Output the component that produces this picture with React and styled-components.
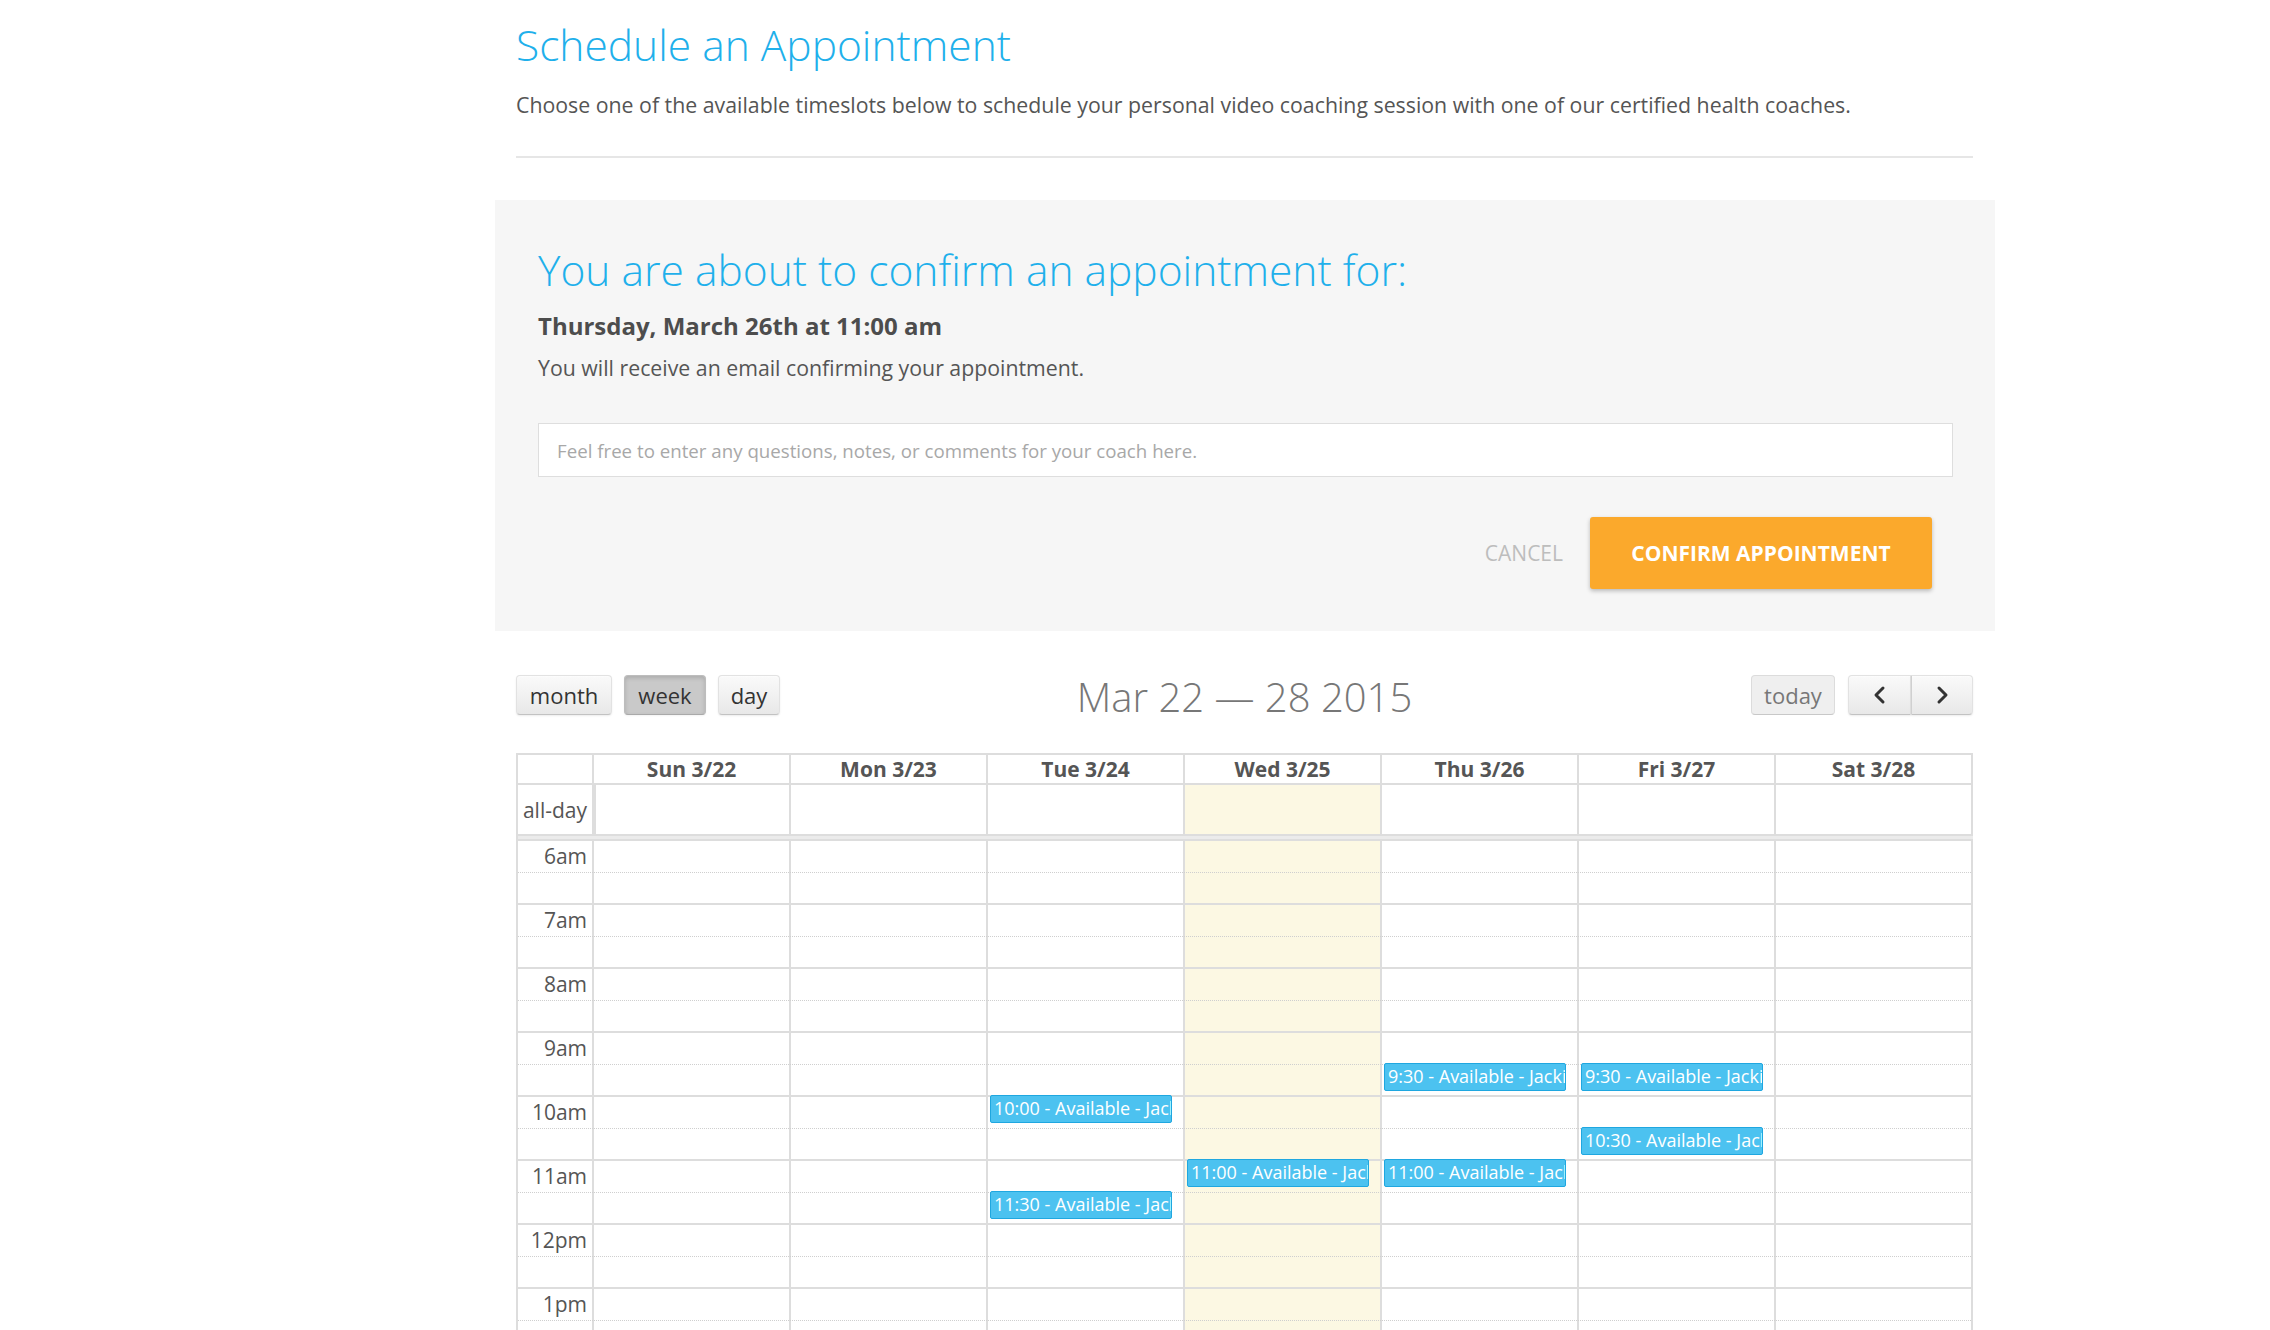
import React from 'react'
import styled, {createGlobalStyle, css} from 'styled-components'

const GlobalStyle = createGlobalStyle`
  html, body {
    margin: 0;
    padding: 0;
    background: #fff;
    overflow: hidden;
  }
  body {
    font-family: "Open Sans", "Liberation Sans", sans-serif;
    color: #555;
  }
  *, *::before, *::after {
    box-sizing: border-box;
  }
`

const BLUE = '#1fb0eb'
const LINE = '#ddd'
const AXIS = '74px'

const Page = styled.main`
  width: 1457px;
  margin-left: 516px;
  padding-top: 22px;
`

const Title = styled.h1`
  margin: 0;
  font-size: 42.5px;
  font-weight: 300;
  line-height: 1.1;
  color: ${BLUE};
`

const Lead = styled.p`
  margin: 21px 0 0;
  font-size: 21.3px;
  line-height: 1.4;
  color: #555;
`

const Rule = styled.hr`
  margin: 36px 0 0;
  border: 0;
  height: 2px;
  background: #e6e6e6;
`

const Panel = styled.section`
  margin: 42px 0 0 -21px;
  width: 1500px;
  padding: 47px 42px 42px 43px;
  background: #f6f6f6;
`

const PanelTitle = styled.h2`
  margin: 0;
  font-size: 42.5px;
  font-weight: 300;
  line-height: 1.1;
  color: ${BLUE};
`

const When = styled.div`
  margin-top: 17px;
  font-size: 24px;
  font-weight: 700;
  line-height: 1.3;
  color: #4d4d4d;
`

const Note = styled.p`
  margin: 11px 0 0;
  font-size: 21.3px;
  line-height: 1.4;
  color: #555;
`

const Notes = styled.input`
  display: block;
  margin-top: 41px;
  width: 100%;
  height: 54px;
  padding: 0 18px;
  border: 1px solid #dedede;
  background: #fff;
  font-family: inherit;
  font-size: 18.7px;
  color: #555;
  outline: none;

  &::placeholder {
    color: #a8a8a8;
  }
`

const Actions = styled.div`
  display: flex;
  justify-content: flex-end;
  align-items: center;
  gap: 27px;
  margin-top: 40px;
  padding-right: 21px;
`

const CancelButton = styled.button`
  border: 0;
  background: none;
  padding: 0;
  font-family: inherit;
  font-size: 21px;
  color: #bdbdbd;
  text-transform: uppercase;
  cursor: pointer;
`

const ConfirmButton = styled.button`
  width: 342px;
  height: 72px;
  border: 0;
  border-radius: 3px;
  background: #fba92c;
  box-shadow: 0 2px 4px rgba(0, 0, 0, 0.25);
  font-family: inherit;
  font-size: 21px;
  font-weight: 700;
  color: #fff;
  text-transform: uppercase;
  cursor: pointer;
`

const Toolbar = styled.div`
  display: grid;
  grid-template-columns: 1fr auto 1fr;
  align-items: center;
  height: 40px;
  margin-top: 42px;
`

const ButtonGroup = styled.div`
  display: flex;
  gap: ${props => props.$gap || 0}px;
  justify-self: ${props => props.$end ? 'end' : 'start'};
`

const ToolButton = styled.button`
  display: flex;
  align-items: center;
  justify-content: center;
  width: ${props => props.$w}px;
  height: 40px;
  padding: 0;
  border: 1px solid;
  border-color: #e2e2e2 #e2e2e2 #c2c2c2;
  border-radius: 4px;
  background: linear-gradient(#fafafa, #e8e8e8);
  box-shadow: inset 0 1px 0 rgba(255, 255, 255, 0.4), 0 1px 2px rgba(0, 0, 0, 0.08);
  font-family: inherit;
  font-size: 22px;
  color: #333;
  cursor: pointer;

  ${props => props.$active && css`
    background: #c9c9c9;
    border-color: #bdbdbd #bdbdbd #a9a9a9;
    box-shadow: inset 0 2px 4px rgba(0, 0, 0, 0.15), 0 1px 2px rgba(0, 0, 0, 0.05);
  `}

  ${props => props.$disabled && css`
    background: #efefef;
    color: #777;
    box-shadow: none;
    border-color: #dcdcdc #dcdcdc #c8c8c8;
  `}

  ${props => props.$left && css`
    border-top-right-radius: 0;
    border-bottom-right-radius: 0;
  `}

  ${props => props.$right && css`
    border-top-left-radius: 0;
    border-bottom-left-radius: 0;
    border-left-color: #d0d0d0;
  `}
`

const RangeTitle = styled.h2`
  margin: 0;
  padding-top: 4px;
  font-size: 40px;
  font-weight: 300;
  line-height: 40px;
  color: #777;
`

const Calendar = styled.div`
  margin-top: 40px;
  border: 2px solid ${LINE};
  border-bottom: 0;
`

const Row = styled.div`
  display: grid;
  grid-template-columns: ${AXIS} repeat(7, 1fr);
`

const HeadRow = styled(Row)`
  height: 30px;
  border-bottom: 2px solid ${LINE};
`

const DayHead = styled.div`
  border-left: 2px solid ${LINE};
  text-align: center;
  font-size: 21px;
  font-weight: 700;
  line-height: 28px;
  color: #555;
`

const AllDayRow = styled(Row)`
  height: 49px;
`

const AxisLabel = styled.div`
  padding: ${props => props.$middle ? '0' : '1px'} 5px 0 0;
  display: flex;
  align-items: ${props => props.$middle ? 'center' : 'flex-start'};
  justify-content: flex-end;
  font-size: 21px;
  line-height: 28px;
  color: #555;
`

const DayCell = styled.div`
  border-left: ${props => props.$thick ? 4 : 2}px solid ${LINE};
  background: ${props => props.$today ? '#fcf8e3' : 'transparent'};
`

const Divider = styled.div`
  height: 7px;
  margin-right: -2px;
  border-top: 2px solid ${LINE};
  border-bottom: 2px solid ${LINE};
  background: #ebebeb;
`

const TimeGrid = styled.div`
  display: grid;
`

const Layer = styled.div`
  grid-area: 1 / 1;
`

const BgColumns = styled(Layer)`
  display: grid;
  grid-template-columns: ${AXIS} repeat(7, 1fr);
`

const Slats = styled(Layer)`
  position: relative;
  z-index: 1;
`

const Slat = styled(Row)`
  position: relative;
  height: 64px;
  border-bottom: 2px solid ${LINE};

  &::after {
    content: '';
    position: absolute;
    left: 0;
    right: 0;
    top: 31px;
    border-top: 1px dotted #cfcfcf;
  }
`

const EventColumns = styled(Layer)`
  position: relative;
  z-index: 2;
  display: grid;
  grid-template-columns: ${AXIS} repeat(7, 1fr);
`

const EventColumn = styled.div`
  position: relative;
  border-left: 2px solid transparent;
`

const Event = styled.div`
  position: absolute;
  left: 2px;
  right: 11px;
  height: 28px;
  padding: 0 3px;
  border: 1px solid #1fa7e0;
  border-radius: 2px;
  background: #4cc2f0;
  color: #fff;
  font-size: 18px;
  line-height: 24px;
  white-space: nowrap;
  overflow: hidden;
`

function Chevron({dir}) {
  const points = dir === 'left' ? '11,3 4,10 11,17' : '5,3 12,10 5,17'
  return (
    <svg width="16" height="20" viewBox="0 0 16 20">
      <polyline points={points} fill="none" stroke="#333" strokeWidth="3" strokeLinecap="round" strokeLinejoin="round" />
    </svg>
  )
}

const days = ['Sun 3/22', 'Mon 3/23', 'Tue 3/24', 'Wed 3/25', 'Thu 3/26', 'Fri 3/27', 'Sat 3/28']
const TODAY = 3

// only the hours that fit in the visible part of the week view
const hours = ['6am', '7am', '8am', '9am', '10am', '11am', '12pm', '1pm']

const events = [
  {day: 2, start: 10, label: '10:00 - Available - Jackie'},
  {day: 2, start: 11.5, label: '11:30 - Available - Jackie'},
  {day: 3, start: 11, label: '11:00 - Available - Jackie'},
  {day: 4, start: 9.5, label: '9:30 - Available - Jackie'},
  {day: 4, start: 11, label: '11:00 - Available - Jackie'},
  {day: 5, start: 9.5, label: '9:30 - Available - Jackie'},
  {day: 5, start: 10.5, label: '10:30 - Available - Jackie'},
]

const HOUR = 64
const FIRST_HOUR = 6

export default function App() {
  return (
    <>
      <GlobalStyle />
      <Page>
        <Title>Schedule an Appointment</Title>
        <Lead>
          Choose one of the available timeslots below to schedule your personal video coaching session with one of our certified health coaches.
        </Lead>
        <Rule />

        <Panel>
          <PanelTitle>You are about to confirm an appointment for:</PanelTitle>
          <When>Thursday, March 26th at 11:00 am</When>
          <Note>You will receive an email confirming your appointment.</Note>
          <Notes placeholder="Feel free to enter any questions, notes, or comments for your coach here." />
          <Actions>
            <CancelButton>Cancel</CancelButton>
            <ConfirmButton>Confirm Appointment</ConfirmButton>
          </Actions>
        </Panel>

        <Toolbar>
          <ButtonGroup $gap={12}>
            <ToolButton $w={96}>month</ToolButton>
            <ToolButton $w={82} $active>week</ToolButton>
            <ToolButton $w={62}>day</ToolButton>
          </ButtonGroup>
          <RangeTitle>Mar 22 — 28 2015</RangeTitle>
          <ButtonGroup $gap={13} $end>
            <ToolButton $w={84} $disabled>today</ToolButton>
            <ButtonGroup>
              <ToolButton $w={63} $left><Chevron dir="left" /></ToolButton>
              <ToolButton $w={62} $right><Chevron dir="right" /></ToolButton>
            </ButtonGroup>
          </ButtonGroup>
        </Toolbar>

        <Calendar>
          <HeadRow>
            <div />
            {days.map(d => <DayHead key={d}>{d}</DayHead>)}
          </HeadRow>
          <AllDayRow>
            <AxisLabel $middle>all-day</AxisLabel>
            {days.map((d, i) => <DayCell key={d} $today={i === TODAY} $thick={i === 0} />)}
          </AllDayRow>
          <Divider />
          <TimeGrid>
            <BgColumns>
              <div />
              {days.map((d, i) => <DayCell key={d} $today={i === TODAY} />)}
            </BgColumns>
            <Slats>
              {hours.map(h => (
                <Slat key={h}>
                  <AxisLabel>{h}</AxisLabel>
                </Slat>
              ))}
            </Slats>
            <EventColumns>
              <div />
              {days.map((d, i) => (
                <EventColumn key={d}>
                  {events.filter(e => e.day === i).map(e => (
                    <Event key={e.label} style={{top: (e.start - FIRST_HOUR) * HOUR - 2}}>
                      {e.label}
                    </Event>
                  ))}
                </EventColumn>
              ))}
            </EventColumns>
          </TimeGrid>
        </Calendar>
      </Page>
    </>
  )
}
